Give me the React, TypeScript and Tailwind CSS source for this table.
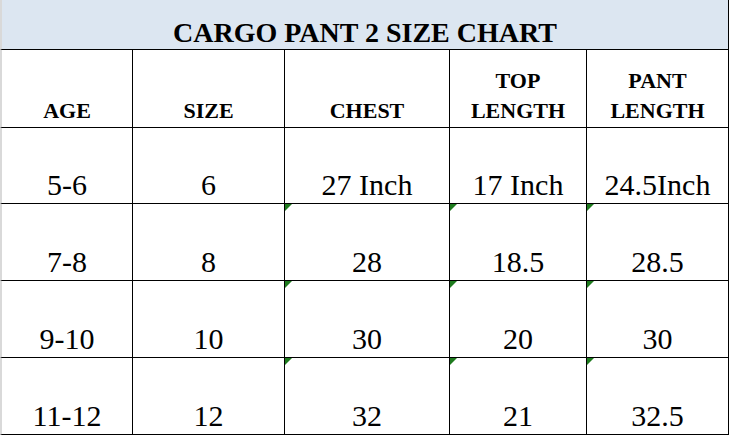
const rows = [
  { age: "5-6", size: "6", chest: "27 Inch", top: "17 Inch", pant: "24.5Inch", mark: false },
  { age: "7-8", size: "8", chest: "28", top: "18.5", pant: "28.5", mark: true },
  { age: "9-10", size: "10", chest: "30", top: "20", pant: "30", mark: true },
  { age: "11-12", size: "12", chest: "32", top: "21", pant: "32.5", mark: true },
];

const rowHeights = ["h-[76px]", "h-[77px]", "h-[77px]", "h-[77px]"];

// spreadsheet font, set on the text nodes themselves
const serif = { fontFamily: "'Liberation Serif', 'Times New Roman', serif" };

// little green "number stored as text" flag, like Excel
const Flag = () => (
  <svg className="absolute left-0 top-0" width="7" height="7" viewBox="0 0 7 7">
    <polygon points="0,0 7,0 0,7" fill="#1e7b1e" />
  </svg>
);

const Cell = ({ children, first, flag, className = "" }: { children: React.ReactNode; first?: boolean; flag?: boolean; className?: string }) => (
  <div
    className={`relative flex items-end justify-center border-b border-r border-black ${
      first ? "border-l-2 border-l-[#d9d9d9]" : ""
    } ${className}`}
  >
    {flag && <Flag />}
    {children}
  </div>
);

export default function App() {
  return (
    <div className="w-[730px] h-[435px] bg-white overflow-hidden">
      <div className="w-[729px]">
        {/* Title */}
        <div className="h-[50px] flex items-end justify-center bg-[#dce6f1] border-b border-r border-black border-l-2 border-l-[#d9d9d9]">
          <div style={serif} className="text-[28px] font-bold text-black leading-[32px]">CARGO PANT 2 SIZE CHART</div>
        </div>

        <div className="grid grid-cols-[133px_152px_165px_137px_142px]">
          {/* Header */}
          {["AGE", "SIZE", "CHEST", "TOP LENGTH", "PANT LENGTH"].map((h, i) => (
            <Cell key={h} first={i === 0} className="h-[78px] pb-[1px]">
              <div style={serif} className="text-[22px] font-bold text-black leading-[30px] text-center w-min">{h}</div>
            </Cell>
          ))}

          {rows.map((r, ri) =>
            [r.age, r.size, r.chest, r.top, r.pant].map((v, ci) => (
              <Cell key={`${ri}-${ci}`} first={ci === 0} flag={r.mark && ci >= 2} className={`${rowHeights[ri]} pb-[1px]`}>
                <div style={serif} className="text-[30px] text-black leading-[34px] whitespace-nowrap">{v}</div>
              </Cell>
            ))
          )}
        </div>
      </div>
    </div>
  );
}
